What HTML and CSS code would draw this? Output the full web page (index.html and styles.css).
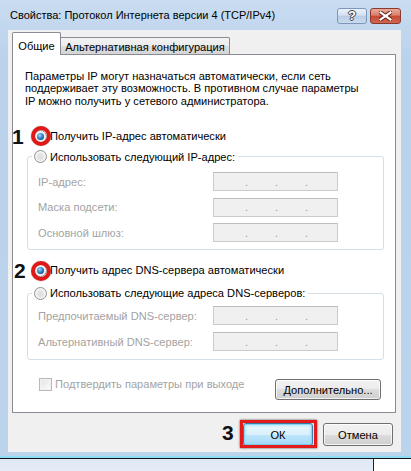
FILE: index.html
```html
<!DOCTYPE html>
<html lang="ru">
<head>
<meta charset="utf-8">
<title>Свойства: Протокол Интернета версии 4 (TCP/IPv4)</title>
<link rel="stylesheet" href="styles.css">
</head>
<body>
<div class="screen">
  <div class="window">
    <div class="titlebar">
      <span class="title">Свойства: Протокол Интернета версии 4 (TCP/IPv4)</span>
      <div class="caption-btns">
        <span class="cbtn help">?</span>
        <span class="cbtn close">
          <svg width="13" height="10" viewBox="0 0 13 10"><path d="M1.5 1.5 L11.5 8.5 M11.5 1.5 L1.5 8.5" stroke="#5a1a10" stroke-width="4" stroke-linecap="square"/><path d="M1.5 1.5 L11.5 8.5 M11.5 1.5 L1.5 8.5" stroke="#fff" stroke-width="2.2" stroke-linecap="square"/></svg>
        </span>
      </div>
    </div>
    <div class="client">
      <div class="tabs">
        <div class="tab active">Общие</div>
        <div class="tab">Альтернативная конфигурация</div>
      </div>
      <div class="panel">
        <p class="intro">Параметры IP могут назначаться автоматически, если сеть<br>поддерживает эту возможность. В противном случае параметры<br>IP можно получить у сетевого администратора.</p>
        <div class="radio-row r1"><span class="radio on"></span><span>Получить IP-адрес автоматически</span></div>
        <fieldset class="group g1">
          <legend><span class="legend-inner"><span class="radio"></span><span>Использовать следующий IP-адрес:</span></span></legend>
          <div class="frow first"><span class="lbl">IP-адрес:</span><span class="ipbox"><i>.</i><i>.</i><i>.</i></span></div>
          <div class="frow"><span class="lbl">Маска подсети:</span><span class="ipbox"><i>.</i><i>.</i><i>.</i></span></div>
          <div class="frow"><span class="lbl">Основной шлюз:</span><span class="ipbox"><i>.</i><i>.</i><i>.</i></span></div>
        </fieldset>
        <div class="radio-row r3"><span class="radio on"></span><span>Получить адрес DNS-сервера автоматически</span></div>
        <fieldset class="group g2">
          <legend><span class="legend-inner"><span class="radio"></span><span>Использовать следующие адреса DNS-серверов:</span></span></legend>
          <div class="frow first"><span class="lbl">Предпочитаемый DNS-сервер:</span><span class="ipbox"><i>.</i><i>.</i><i>.</i></span></div>
          <div class="frow"><span class="lbl">Альтернативный DNS-сервер:</span><span class="ipbox"><i>.</i><i>.</i><i>.</i></span></div>
        </fieldset>
        <div class="bottom-row">
          <span class="check"><span class="box"></span><span>Подтвердить параметры при выходе</span></span>
          <span class="btn adv">Дополнительно...</span>
        </div>
      </div>
      <div class="actions">
        <span class="btn default">ОК</span>
        <span class="btn">Отмена</span>
      </div>
    </div>
    <div class="edge"></div>
  </div>
  <div class="under"><div class="under-left"></div></div>

  <span class="num n1">1</span>
  <span class="ring ring1"></span>
  <span class="num n2">2</span>
  <span class="ring ring2"></span>
  <span class="num n3">3</span>
  <span class="okmark"></span>
</div>
</body>
</html>
```

FILE: styles.css
```css
* { box-sizing: border-box; }
html, body { margin: 0; padding: 0; }
body {
  width: 411px;
  height: 471px;
  overflow: hidden;
  background: #fff;
  font-family: "Liberation Sans", Arial, sans-serif;
  font-size: 11.1px;
  color: #000;
}
.screen {
  position: relative;
  width: 411px;
  height: 471px;
  overflow: hidden;
  background: #fff;
}
.window {
  width: 411px;
  height: 459px;
  padding-left: 8px;
  background: linear-gradient(#c9dcf1, #bad2eb 60px, #bcd3ec);
  border-bottom: 1px solid #111;
  display: flex;
  flex-direction: column;
}
.titlebar {
  height: 30px;
  display: flex;
  align-items: flex-start;
}
.title {
  flex: 1;
  margin-top: 8px;
  padding-left: 2px;
  line-height: 14px;
  font-size: 11px;
  color: #000;
  white-space: nowrap;
}
.caption-btns {
  display: flex;
  margin-top: 8px;
  margin-right: 10px;
  gap: 3px;
}
.cbtn {
  height: 16px;
  border-radius: 3px;
  display: flex;
  align-items: center;
  justify-content: center;
}
.help {
  width: 30px;
  border: 1px solid #7d97b8;
  background: linear-gradient(#eaf1fa, #d3e1f1 45%, #b9cde6 50%, #c9dbee);
  color: #fff;
  font-weight: bold;
  font-size: 13px;
  line-height: 14px;
  text-shadow: 0 0 1px #334, 1px 0 0 #445, -1px 0 0 #445, 0 1px 0 #445, 0 -1px 0 #445;
}
.close {
  width: 31px;
  border: 1px solid #8a3a2c;
  background: linear-gradient(#e9aa9a, #d9806c 45%, #c54a33 50%, #d06650);
}
.client {
  width: 393px;
  height: 422px;
  background: #f0f0f0;
  display: flex;
  flex-direction: column;
}
.edge {
  margin-top: 4px;
  height: 2px;
  margin-left: -8px;
  background: #8fdcf6;
}
.tabs {
  position: relative;
  z-index: 1;
  display: flex;
  align-items: flex-end;
  margin: 2px 0 -1px 4px;
  height: 23px;
}
.tab {
  height: 17px;
  width: 169px;
  margin-bottom: 1px;
  border: 1px solid #898c95;
  border-bottom: 0;
  border-left: 0;
  border-radius: 0 2px 0 0;
  background: linear-gradient(#f3f3f3, #ebebeb 50%, #dddddd 50%, #d5d5d5);
  display: flex;
  justify-content: center;
  align-items: center;
  padding-top: 2px;
  line-height: 14px;
  white-space: nowrap;
}
.tab.active {
  height: 23px;
  width: 49px;
  margin-bottom: 0;
  border-left: 1px solid #898c95;
  border-radius: 2px 2px 0 0;
  background: #fff;
  padding-top: 3px;
}
.panel {
  margin-left: 4px;
  width: 384px;
  height: 359px;
  border: 1px solid #898c95;
  background: #fff;
  padding-top: 14.5px;
  display: flex;
  flex-direction: column;
}
.intro {
  margin: 0 0 0 12px;
  line-height: 12.5px;
}
.radio-row {
  display: flex;
  align-items: center;
  height: 14px;
  margin-left: 21px;
  gap: 3px;
  line-height: 14px;
}
.r1 { margin-top: 22px; }
.r3 { margin-top: 13px; }
.radio {
  flex: none;
  position: relative;
  width: 13px;
  height: 13px;
  border-radius: 50%;
  border: 1px solid #8e9194;
  background: radial-gradient(circle at 50% 55%, #dcdcdc 0, #e9e9e9 45%, #f8f8f8 70%);
  box-shadow: inset 0 0 0 1px #f6f6f6;
}
.radio.on::after {
  content: "";
  position: absolute;
  left: 2px;
  top: 2px;
  width: 7px;
  height: 7px;
  border-radius: 50%;
  background: radial-gradient(circle at 40% 35%, #a8dcf8 0, #3d8fcf 40%, #0d4d8f 80%);
}
.group {
  margin: 6.5px 0 0 14px;
  width: 357px;
  min-inline-size: 0;
  border: 1px solid #d5dfe5;
  border-radius: 3px;
  padding: 0 0 7px 0;
}
.group legend {
  margin-left: 4px;
  padding: 0 3px 0 2px;
  line-height: 14px;
  height: 14px;
}
.legend-inner {
  display: flex;
  align-items: center;
  gap: 3px;
  height: 14px;
}
.g2 { margin-top: 9px; padding-bottom: 8px; }
.frow {
  display: grid;
  grid-template-columns: 175px 125px;
  align-items: center;
  height: 19px;
  margin: 6.5px 0 0 10px;
}
.frow.first { margin-top: 8.5px; }
.g2 .frow { margin-top: 7px; }
.g2 .frow.first { margin-top: 6px; }
.lbl { color: #a3a3a3; line-height: 14px; }
.ipbox {
  height: 19px;
  border: 1px solid #cbcbcb;
  border-top-color: #bdbdbd;
  background: #f0f0f0;
  display: flex;
  align-items: center;
  padding-left: 31px;
  gap: 27px;
}
.ipbox i {
  font-style: normal;
  color: #9a9a9a;
  line-height: 12px;
  width: 3px;
  font-size: 11px;
}
.bottom-row {
  display: flex;
  justify-content: space-between;
  align-items: flex-start;
  margin: 19px 14px 0 26px;
}
.check {
  display: flex;
  align-items: center;
  gap: 3px;
  color: #a3a3a3;
  margin-top: -1px;
  line-height: 13px;
}
.box {
  width: 13px;
  height: 13px;
  border: 1px solid #b8b8b8;
  background: linear-gradient(135deg, #e4e4e4, #fbfbfb);
  box-shadow: inset 0 0 0 1px #f2f2f2;
}
.btn {
  display: flex;
  align-items: center;
  justify-content: center;
  width: 70px;
  height: 23px;
  border: 1px solid #707070;
  border-radius: 3px;
  background: linear-gradient(#f2f2f2, #ebebeb 50%, #dddddd 50%, #cfcfcf);
  box-shadow: inset 0 0 0 1px rgba(255,255,255,0.75);
  line-height: 14px;
}
.btn.adv {
  width: 106px;
  height: 21px;
}
.btn.default {
  border-color: #3c7fb1;
  background: linear-gradient(#eaf6fd, #d9f0fc 50%, #bee6fd 50%, #a7d9f5);
  box-shadow: inset 0 0 0 1px #86d4f6, inset 0 0 2px 2px rgba(150,220,250,0.5);
}
.actions {
  display: flex;
  justify-content: flex-end;
  gap: 10px;
  margin: 10px 8px 0 0;
}
.under {
  display: flex;
  height: 12px;
}
.under-left {
  width: 374px;
  background: linear-gradient(#dfe8f4, #e4ecf6);
  border-right: 1px solid #222;
}
.num {
  position: absolute;
  font-family: "Liberation Sans", Arial, sans-serif;
  font-weight: bold;
  font-size: 21px;
  line-height: 21px;
  color: #111;
}
.n1 { left: 12px; top: 125.5px; }
.n2 { left: 14px; top: 259.5px; }
.n3 { left: 222px; top: 422px; }
.ring {
  position: absolute;
  width: 20px;
  height: 20px;
  border-radius: 50%;
  border: 4px solid #e01818;
  box-shadow: 0 0 1px rgba(0,0,0,0.6);
}
.ring1 { left: 31px; top: 126px; }
.ring2 { left: 31px; top: 261px; }
.okmark {
  position: absolute;
  left: 240px;
  top: 420px;
  width: 77px;
  height: 28px;
  border: 3px solid #e21a1a;
  box-shadow: 0 0 2px rgba(0,0,0,0.7), inset 0 0 1px rgba(0,0,0,0.6);
}
```
